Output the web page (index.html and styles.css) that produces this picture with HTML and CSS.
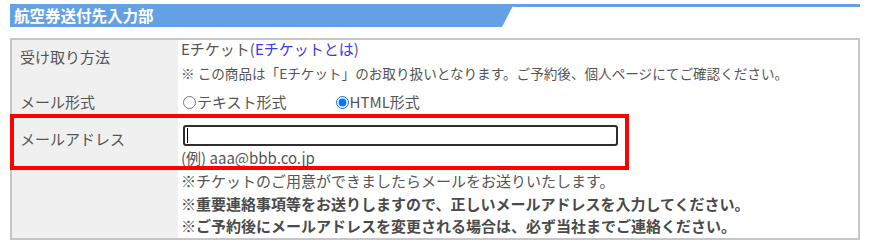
FILE: index.html
```html
<!DOCTYPE html>
<html lang="ja">
<head>
  <meta charset="UTF-8">
  <title>航空券送付先入力部</title>
  <link rel="stylesheet" href="styles.css">
</head>
<body>
  <div class="section">
    <div class="section-head">
      <h2 class="section-title">航空券送付先入力部</h2>
      <div class="section-line"></div>
    </div>

    <div class="form-table">
      <div class="row">
        <div class="label label-receive">受け取り方法</div>
        <div class="value value-receive">
          <div class="ticket">Eチケット(<a href="#" class="link">Eチケットとは</a>)</div>
          <div class="note">※ この商品は「Eチケット」のお取り扱いとなります。ご予約後、個人ページにてご確認ください。</div>
        </div>
      </div>

      <div class="row">
        <div class="label label-format">メール形式</div>
        <div class="value value-format">
          <label class="choice choice-text"><input type="radio" name="format">テキスト形式</label>
          <label class="choice"><input type="radio" name="format" checked>HTML形式</label>
        </div>
      </div>

      <div class="row row-mail">
        <div class="label label-mail">メールアドレス</div>
        <div class="value value-mail">
          <div class="field">
            <input type="text" class="mail-input">
            <span class="caret"></span>
          </div>
          <div class="example">(例) aaa@bbb.co.jp</div>
        </div>
      </div>

      <div class="row">
        <div class="label"></div>
        <div class="value value-notes">
          <div>※チケットのご用意ができましたらメールをお送りいたします。</div>
          <div class="strong">※重要連絡事項等をお送りしますので、正しいメールアドレスを入力してください。</div>
          <div class="strong">※ご予約後にメールアドレスを変更される場合は、必ず当社までご連絡ください。</div>
        </div>
      </div>
    </div>
  </div>
</body>
</html>
```

FILE: styles.css
```css
body {
  margin: 0;
  background: white;
  font-family: "Noto Sans CJK JP", "Noto Sans", sans-serif;
  color: #555;
}

.section {
  padding: 4px 15px 0 10px;
}

/* header bar with slanted end */
.section-head {
  display: flex;
  height: 23px;
}

.section-title {
  margin: 0;
  width: 504px;
  flex: none;
  height: 23px;
  background: #63a1e4;
  color: white;
  font-size: 15.5px;
  font-weight: bold;
  line-height: 23px;
  padding-left: 4px;
  box-sizing: border-box;
  clip-path: polygon(0 0, 100% 0, calc(100% - 12px) 100%, 0 100%);
}

.section-line {
  flex: 1;
  border-top: 3px solid #63a1e4;
  margin-left: -1px;
}

.form-table {
  margin-top: 11px;
  border: 2px solid #c6c6c6;
}

.row {
  display: grid;
  grid-template-columns: 166px 1fr;
}

.label {
  background: #f0f0f0;
  font-size: 15px;
  line-height: 20px;
  padding-left: 8px;
}

.label-receive {
  padding-top: 7px;
}

.label-format {
  padding-top: 6px;
}

.label-mail {
  padding-top: 13px;
}

.value {
  padding-left: 3px;
  font-size: 15px;
}

.value-receive {
  padding-bottom: 3px;
}

.ticket {
  line-height: 17px;
}

.link {
  color: #3a3af2;
  text-decoration: none;
}

.note {
  margin-top: 6px;
  font-size: 13.6px;
  line-height: 20px;
}

.value-format {
  display: flex;
  align-items: center;
  padding-top: 6px;
  padding-bottom: 4px;
  line-height: 20px;
}

.choice {
  display: flex;
  align-items: center;
}

.choice input {
  margin: 0 1px 0 2px;
  width: 13px;
  height: 13px;
}

.choice-text {
  margin-right: 47px;
}

/* mail row is highlighted with a red frame */
.row-mail {
  position: relative;
}

.row-mail::after {
  content: '';
  position: absolute;
  top: -2px;
  left: -2px;
  width: 619px;
  height: 56px;
  border: 4px solid #ff0000;
  box-sizing: border-box;
  pointer-events: none;
}

.value-mail {
  padding-top: 9px;
}

.field {
  position: relative;
  margin-left: 2px;
  width: 435px;
  height: 21px;
}

.mail-input {
  display: block;
  width: 100%;
  height: 100%;
  box-sizing: border-box;
  border: 2px solid #2e2e2e;
  border-radius: 3px;
  outline: none;
  margin: 0;
  background: white;
}

.caret {
  position: absolute;
  left: 4px;
  top: 3px;
  width: 1px;
  height: 15px;
  background: black;
}

.example {
  margin-top: 2px;
  line-height: 20px;
}

.value-notes {
  padding-top: 2px;
  line-height: 22.5px;
}

.strong {
  font-weight: bold;
  color: #4a4a4a;
}
```
